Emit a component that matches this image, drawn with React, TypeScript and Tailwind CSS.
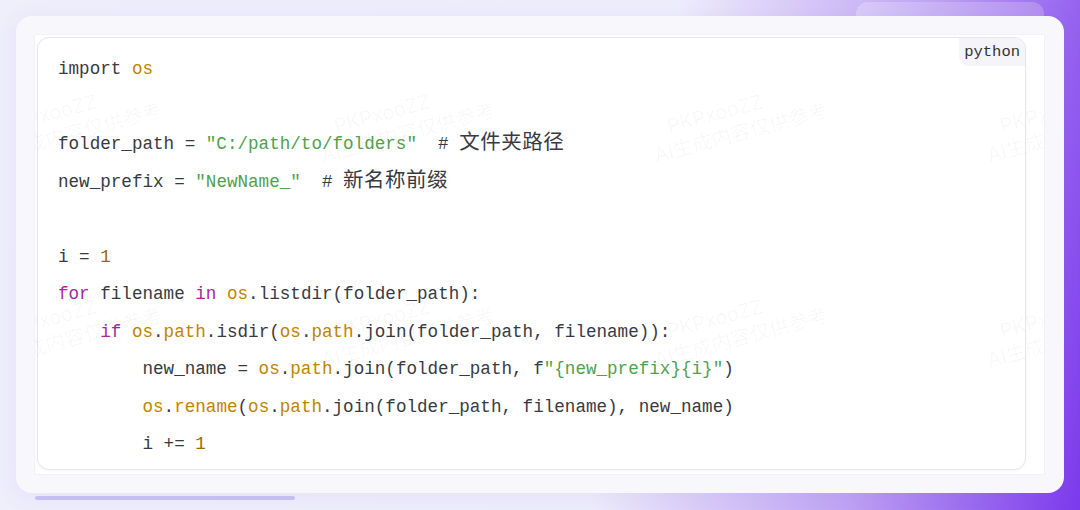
import React from 'react';

type Tok = [string, string?];

const C = {
    txt: 'text-[#383a42]',
    mod: 'text-[#c18401]',
    str: 'text-[#50a14f]',
    num: 'text-[#986801]',
    kw: 'text-[#a626a4]',
};

const lines: Tok[][] = [
    [['import '], ['os', C.mod]],
    [],
    [['folder_path = '], ['"C:/path/to/folders"', C.str], ['  # '], ['文件夹路径', 'cjk']],
    [['new_prefix = '], ['"NewName_"', C.str], ['  # '], ['新名称前缀', 'cjk']],
    [],
    [['i = '], ['1', C.num]],
    [['for', C.kw], [' filename '], ['in', C.kw], [' '], ['os', C.mod], ['.listdir(folder_path):']],
    [['    '], ['if', C.kw], [' '], ['os', C.mod], ['.'], ['path', C.mod], ['.isdir('], ['os', C.mod], ['.'], ['path', C.mod], ['.join(folder_path, filename)):']],
    [['        new_name = '], ['os', C.mod], ['.'], ['path', C.mod], ['.join(folder_path, f'], ['"{new_prefix}{i}"', C.str], [')']],
    [['        '], ['os', C.mod], ['.'], ['rename', C.mod], ['('], ['os', C.mod], ['.'], ['path', C.mod], ['.join(folder_path, filename), new_name)']],
    [['        i += '], ['1', C.num]],
];

// watermark grid, coords relative to the inner panel
const marks = [
    { l: -56, t: 85 }, { l: 277, t: 85 }, { l: 610, t: 85 }, { l: 943, t: 85 },
    { l: -56, t: 290 }, { l: 277, t: 290 }, { l: 610, t: 290 }, { l: 943, t: 290 },
];

const Watermark = ({ l, t }: { l: number; t: number }) => (
    <div
        className="absolute origin-top-left -rotate-[15deg] text-[20px] leading-[25px] text-black/[0.035] font-['Inter','Noto_Sans_CJK_SC',sans-serif] whitespace-nowrap select-none"
        style={{ left: l, top: t }}
    >
        <div className="pl-5">PKPxooZZ</div>
        <div>AI生成内容仅供参考</div>
    </div>
);

export default function App() {
    return (
        <div className="relative w-[1080px] h-[510px] overflow-hidden bg-[linear-gradient(100deg,#efeefb_0%,#eeedfb_58%,#bfa3f3_80%,#7c3aed_100%)] pt-4 px-4">
            {/* card peeking behind */}
            <div className="absolute left-[856px] top-[2px] w-[188px] h-[40px] rounded-[12px] bg-gradient-to-r from-[#d9ccf7] to-[#b38ff0]"></div>

            <div className="relative z-10 w-[1048px] h-[477px] rounded-[16px] bg-[#f8f7fc] shadow-[0_4px_24px_rgba(110,90,200,0.08)] pt-[18px] pl-[18px] pr-[19px] pb-[18px]">
                <div className="relative h-full bg-white border border-[#f2f1f6] pl-[2px] pt-[2px] pr-[18px] pb-[4px] overflow-hidden">
                    <div className="relative h-full rounded-[12px] border border-[#e6e6ea] bg-white shadow-[0_1px_3px_rgba(0,0,0,0.04)] pl-[20px] pt-[13px]">
                        <div className="absolute top-0 right-0 rounded-bl-[10px] rounded-tr-[12px] bg-[#f4f4f9] pl-[5px] pr-[5px] pt-[5px] pb-[5px] text-[15.5px] leading-[18px] text-[#333] font-['Liberation_Mono',monospace]">
                            python
                        </div>
                        <div className="font-['Liberation_Mono','Noto_Sans_CJK_SC',monospace] text-[17.6px] leading-[37.5px] whitespace-pre">
                            {lines.map((ln, i) => (
                                <div key={i} className="h-[37.5px]">
                                    {ln.map(([s, c], j) =>
                                        c === 'cjk' ? (
                                            <span key={j} className="text-[20.5px] leading-none text-[#383a42] font-['Noto_Sans_CJK_SC',sans-serif] tracking-[0.5px]">{s}</span>
                                        ) : (
                                            <span key={j} className={c ?? C.txt}>{s}</span>
                                        )
                                    )}
                                </div>
                            ))}
                        </div>
                    </div>
                    <div className="absolute inset-0 pointer-events-none">
                        {marks.map((m, i) => (
                            <Watermark key={i} l={m.l} t={m.t} />
                        ))}
                    </div>
                </div>
            </div>
            <div className="ml-[19px] mt-[3px] w-[260px] h-[4px] rounded-full bg-[#c8c3f5]"></div>
        </div>
    );
}
